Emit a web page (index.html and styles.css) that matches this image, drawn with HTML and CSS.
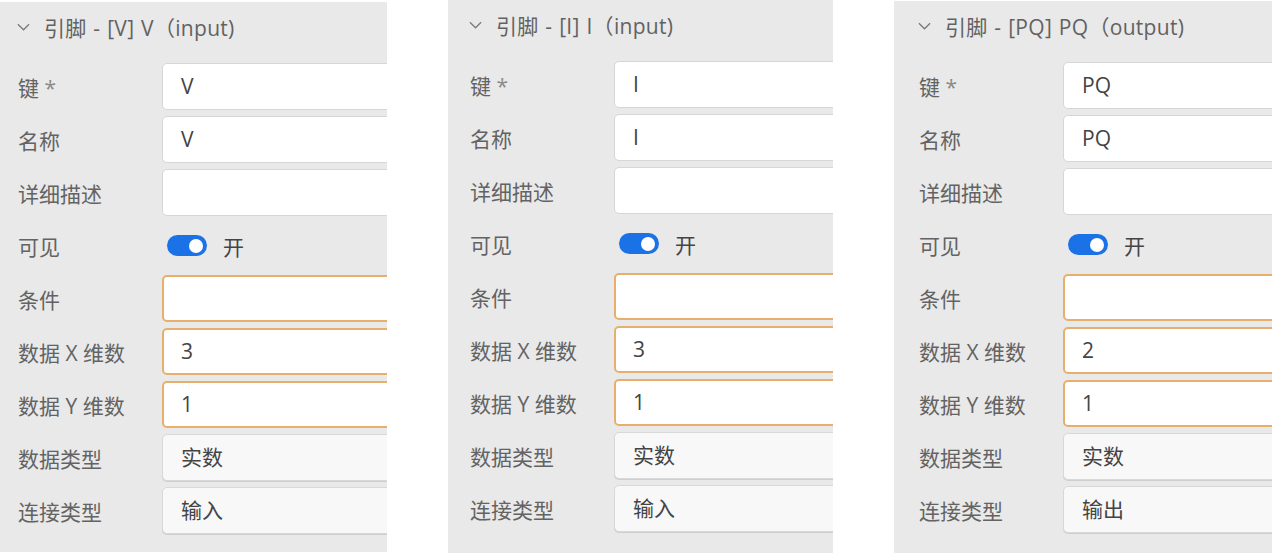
FILE: index.html
```html
<!DOCTYPE html>
<html lang="zh">
<head>
<meta charset="utf-8">
<link rel="stylesheet" href="styles.css">
</head>
<body>
<div class="stage">
  <section class="panel p1">
    <div class="head"><svg class="chev" viewBox="0 0 14 8"><path d="M1 1 L7 7 L13 1" fill="none" stroke="#7a7a7a" stroke-width="1.4"/></svg><span>引脚 - [V] V（input)</span></div>
    <div class="row"><label>键 <span class="star">*</span></label><div class="field">V</div></div>
    <div class="row"><label>名称</label><div class="field">V</div></div>
    <div class="row"><label>详细描述</label><div class="field"></div></div>
    <div class="row"><label>可见</label><div class="tog"><span class="sw"><span class="knob"></span></span><span>开</span></div></div>
    <div class="row"><label>条件</label><div class="field warn"></div></div>
    <div class="row"><label>数据 X 维数</label><div class="field warn">3</div></div>
    <div class="row"><label>数据 Y 维数</label><div class="field warn">1</div></div>
    <div class="row"><label>数据类型</label><div class="field sel">实数</div></div>
    <div class="row"><label>连接类型</label><div class="field sel">输入</div></div>
  </section>
  <section class="panel p2">
    <div class="head"><svg class="chev" viewBox="0 0 14 8"><path d="M1 1 L7 7 L13 1" fill="none" stroke="#7a7a7a" stroke-width="1.4"/></svg><span>引脚 - [I] I（input)</span></div>
    <div class="row"><label>键 <span class="star">*</span></label><div class="field">I</div></div>
    <div class="row"><label>名称</label><div class="field">I</div></div>
    <div class="row"><label>详细描述</label><div class="field"></div></div>
    <div class="row"><label>可见</label><div class="tog"><span class="sw"><span class="knob"></span></span><span>开</span></div></div>
    <div class="row"><label>条件</label><div class="field warn"></div></div>
    <div class="row"><label>数据 X 维数</label><div class="field warn">3</div></div>
    <div class="row"><label>数据 Y 维数</label><div class="field warn">1</div></div>
    <div class="row"><label>数据类型</label><div class="field sel">实数</div></div>
    <div class="row"><label>连接类型</label><div class="field sel">输入</div></div>
  </section>
  <section class="panel p3">
    <div class="head"><svg class="chev" viewBox="0 0 14 8"><path d="M1 1 L7 7 L13 1" fill="none" stroke="#7a7a7a" stroke-width="1.4"/></svg><span>引脚 - [PQ] PQ（output)</span></div>
    <div class="row"><label>键 <span class="star">*</span></label><div class="field">PQ</div></div>
    <div class="row"><label>名称</label><div class="field">PQ</div></div>
    <div class="row"><label>详细描述</label><div class="field"></div></div>
    <div class="row"><label>可见</label><div class="tog"><span class="sw"><span class="knob"></span></span><span>开</span></div></div>
    <div class="row"><label>条件</label><div class="field warn"></div></div>
    <div class="row"><label>数据 X 维数</label><div class="field warn">2</div></div>
    <div class="row"><label>数据 Y 维数</label><div class="field warn">1</div></div>
    <div class="row"><label>数据类型</label><div class="field sel">实数</div></div>
    <div class="row"><label>连接类型</label><div class="field sel">输出</div></div>
  </section>
</div>
</body>
</html>
```
FILE: styles.css
```css
html, body {
  margin: 0;
  padding: 0;
  background: #fff;
}
body {
  font-family: "Open Sans", "Noto Sans CJK SC", sans-serif;
  color: #5c5c5c;
  overflow: hidden;
}
.stage {
  display: flex;
  align-items: flex-start;
  gap: 61px;
  height: 553px;
}
.panel {
  background: #e9e9e9;
  overflow: hidden;
  box-sizing: border-box;
  flex: none;
}
.p1 { width: 387px; height: 550px; margin-top: 2px; padding-left: 18px; }
.p2 { width: 385px; height: 553px; padding-left: 22px; }
.p3 { width: 378px; height: 552px; margin-top: 1px; padding-left: 25px; }
.head {
  height: 50px;
  display: flex;
  align-items: center;
  gap: 14px;
  font-size: 21px;
  letter-spacing: 0.3px;
  word-spacing: 1px;
  color: #626262;
  margin-bottom: 11px;
  box-sizing: border-box;
}
.chev {
  width: 13px;
  height: 8px;
  margin-left: -1px;
  flex: none;
}
.row {
  display: flex;
  align-items: center;
  height: 47px;
  margin-bottom: 6px;
}
.row label {
  width: 144px;
  flex: none;
  font-size: 21px;
  color: #636363;
  white-space: nowrap;
}
.star {
  color: #8a8a8a;
}
.field {
  flex: none;
  width: 260px;
  height: 47px;
  box-sizing: border-box;
  border: 1px solid #d6d6d6;
  border-radius: 5px;
  background: #fff;
  padding-left: 18px;
  font-size: 21px;
  line-height: 45px;
  color: #444;
}
.field.warn {
  border: 2px solid #e6b06c;
  line-height: 43px;
  padding-left: 17px;
}
.field.sel {
  background: #f8f8f8;
  border-color: #d8d8d8;
  box-shadow: 0 1px 0 #cfcfcf;
}
.tog {
  display: flex;
  align-items: center;
  gap: 16px;
  font-size: 21px;
  color: #444;
  padding-left: 5px;
}
.sw {
  width: 40px;
  height: 21px;
  border-radius: 11px;
  background: #1b72e6;
  display: flex;
  align-items: center;
  justify-content: flex-end;
  padding-right: 4px;
  box-sizing: border-box;
}
.knob {
  width: 14px;
  height: 14px;
  border-radius: 50%;
  background: #fff;
}
```
